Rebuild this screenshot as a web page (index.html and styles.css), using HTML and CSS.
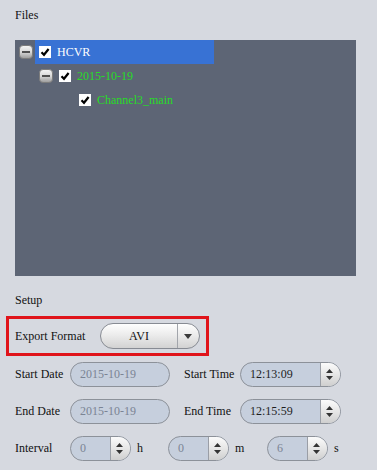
FILE: index.html
```html
<!DOCTYPE html>
<html>
<head>
<meta charset="utf-8">
<link rel="stylesheet" href="styles.css">
</head>
<body>
<div class="page">
  <div class="section-title files-title">Files</div>
  <div class="tree">
    <div class="node lvl0">
      <svg class="toggle" viewBox="0 0 14 14"><defs><linearGradient id="tg" x1="0" y1="0" x2="0" y2="1"><stop offset="0" stop-color="#f6f6f6"/><stop offset="0.5" stop-color="#d8d8d8"/><stop offset="1" stop-color="#9a9a9a"/></linearGradient></defs><rect x="0.5" y="0.5" width="13" height="13" rx="3.5" fill="url(#tg)" stroke="#7c7c7c"/><rect x="3" y="6" width="8" height="2" fill="#505050"/></svg>
      <div class="item sel">
        <svg class="check" viewBox="0 0 12 12"><rect width="12" height="12" fill="#fff"/><path d="M2.5 6.2 L5 8.8 L9.6 3" fill="none" stroke="#000" stroke-width="2.2"/></svg>
        <span>HCVR</span>
      </div>
    </div>
    <div class="node lvl1">
      <svg class="toggle" viewBox="0 0 14 14"><rect x="0.5" y="0.5" width="13" height="13" rx="3.5" fill="url(#tg)" stroke="#7c7c7c"/><rect x="3" y="6" width="8" height="2" fill="#505050"/></svg>
      <div class="item">
        <svg class="check" viewBox="0 0 12 12"><rect width="12" height="12" fill="#fff"/><path d="M2.5 6.2 L5 8.8 L9.6 3" fill="none" stroke="#000" stroke-width="2.2"/></svg>
        <span>2015-10-19</span>
      </div>
    </div>
    <div class="node lvl2">
      <span class="toggle"></span>
      <div class="item">
        <svg class="check" viewBox="0 0 12 12"><rect width="12" height="12" fill="#fff"/><path d="M2.5 6.2 L5 8.8 L9.6 3" fill="none" stroke="#000" stroke-width="2.2"/></svg>
        <span>Channel3_main</span>
      </div>
    </div>
  </div>
  <div class="section-title setup-title">Setup</div>
  <div class="format-box">
    <span class="format-label">Export Format</span>
    <div class="select">
      <span class="select-val">AVI</span>
      <span class="select-btn"><svg width="8" height="5" viewBox="0 0 8 5"><path d="M0 0 H8 L4 5 Z" fill="#3a3a3a"/></svg></span>
    </div>
  </div>
  <div class="form">
    <div class="frow">
      <span class="lbl">Start Date</span>
      <div class="field date"><span class="val">2015-10-19</span></div>
      <span class="lbl lbl2">Start Time</span>
      <div class="field time"><span class="val">12:13:09</span>
        <span class="spin"><svg width="7" height="11" viewBox="0 0 7 11"><path d="M0 4 L3.5 0 L7 4 Z M0 7 H7 L3.5 11 Z" fill="#333"/></svg></span></div>
    </div>
    <div class="frow">
      <span class="lbl">End Date</span>
      <div class="field date"><span class="val">2015-10-19</span></div>
      <span class="lbl lbl2">End Time</span>
      <div class="field time"><span class="val">12:15:59</span>
        <span class="spin"><svg width="7" height="11" viewBox="0 0 7 11"><path d="M0 4 L3.5 0 L7 4 Z M0 7 H7 L3.5 11 Z" fill="#333"/></svg></span></div>
    </div>
    <div class="frow">
      <span class="lbl">Interval</span>
      <div class="field num"><span class="val">0</span>
        <span class="spin"><svg width="7" height="11" viewBox="0 0 7 11"><path d="M0 4 L3.5 0 L7 4 Z M0 7 H7 L3.5 11 Z" fill="#333"/></svg></span></div>
      <span class="unit u1">h</span>
      <div class="field num"><span class="val">0</span>
        <span class="spin"><svg width="7" height="11" viewBox="0 0 7 11"><path d="M0 4 L3.5 0 L7 4 Z M0 7 H7 L3.5 11 Z" fill="#333"/></svg></span></div>
      <span class="unit u2">m</span>
      <div class="field num"><span class="val">6</span>
        <span class="spin"><svg width="7" height="11" viewBox="0 0 7 11"><path d="M0 4 L3.5 0 L7 4 Z M0 7 H7 L3.5 11 Z" fill="#333"/></svg></span></div>
      <span class="unit">s</span>
    </div>
  </div>
</div>
</body>
</html>
```

FILE: styles.css
```css
* { box-sizing: border-box; }
html, body { margin: 0; padding: 0; }
body {
  background: #d6d9e0;
  font-family: "Liberation Serif", "Times New Roman", serif;
  font-size: 12px;
  color: #111;
  width: 377px;
  height: 470px;
  overflow: hidden;
}
.section-title { padding-left: 15px; }
.files-title { height: 40px; line-height: 30px; }
.tree {
  margin-left: 15px;
  width: 341px;
  height: 236px;
  background: #5d6575;
}
.node { height: 24px; display: flex; align-items: center; }
.lvl0 { padding-left: 4px; }
.lvl1 { padding-left: 24px; }
.lvl2 { padding-left: 44px; }
.toggle { width: 14px; height: 14px; margin-right: 2px; flex: none; display: block; }
.item {
  display: flex;
  align-items: center;
  height: 24px;
  line-height: 24px;
  padding-left: 4px;
  gap: 6px;
  color: #27dc27;
}
.item.sel { background: #3872d4; color: #fff; width: 179px; }
.check { width: 12px; height: 12px; flex: none; display: block; }

.setup-title { padding-top: 14px; line-height: 20px; height: 34px; }

.format-box {
  margin: 6px 0 0 6px;
  width: 203px;
  height: 40px;
  border: 3px solid #e0141b;
  display: flex;
  align-items: center;
  padding-left: 6px;
}
.format-label { width: 85px; flex: none; }
.select {
  width: 100px;
  height: 26px;
  border: 1px solid #878b93;
  border-radius: 13px;
  background: linear-gradient(#fefefe, #ececec 45%, #d2d2d2);
  display: flex;
  overflow: hidden;
}
.select-val { flex: 1; text-align: center; line-height: 24px; }
.select-btn {
  width: 22px;
  border-left: 1px solid #a2a5ab;
  display: flex;
  align-items: center;
  justify-content: center;
  padding-right: 2px;
}

.form {
  margin-top: 6px;
  display: flex;
  flex-direction: column;
  gap: 12px;
  padding-left: 15px;
}
.frow { display: flex; align-items: center; height: 25px; }
.lbl { width: 55px; flex: none; }
.lbl2 { margin-left: 14px; width: 56px; }
.field {
  height: 25px;
  border: 1px solid #8c9199;
  border-radius: 13px;
  background: #c6cfdd;
  display: flex;
  overflow: hidden;
  flex: none;
}
.date { width: 100px; }
.time { width: 101px; }
.num { width: 61px; }
.val { flex: 1; padding-left: 9px; line-height: 23px; color: #7b8494; }
.time .val { color: #1e1e1e; }
.spin {
  width: 20px;
  border-left: 1px solid #9a9ea6;
  background: linear-gradient(#fbfbfb, #e6e6e6 50%, #cfcfcf);
  display: flex;
  align-items: center;
  justify-content: center;
  padding-right: 2px;
}
.unit { padding-left: 6px; }
.u1 { width: 37px; }
.u2 { width: 38px; }
```
